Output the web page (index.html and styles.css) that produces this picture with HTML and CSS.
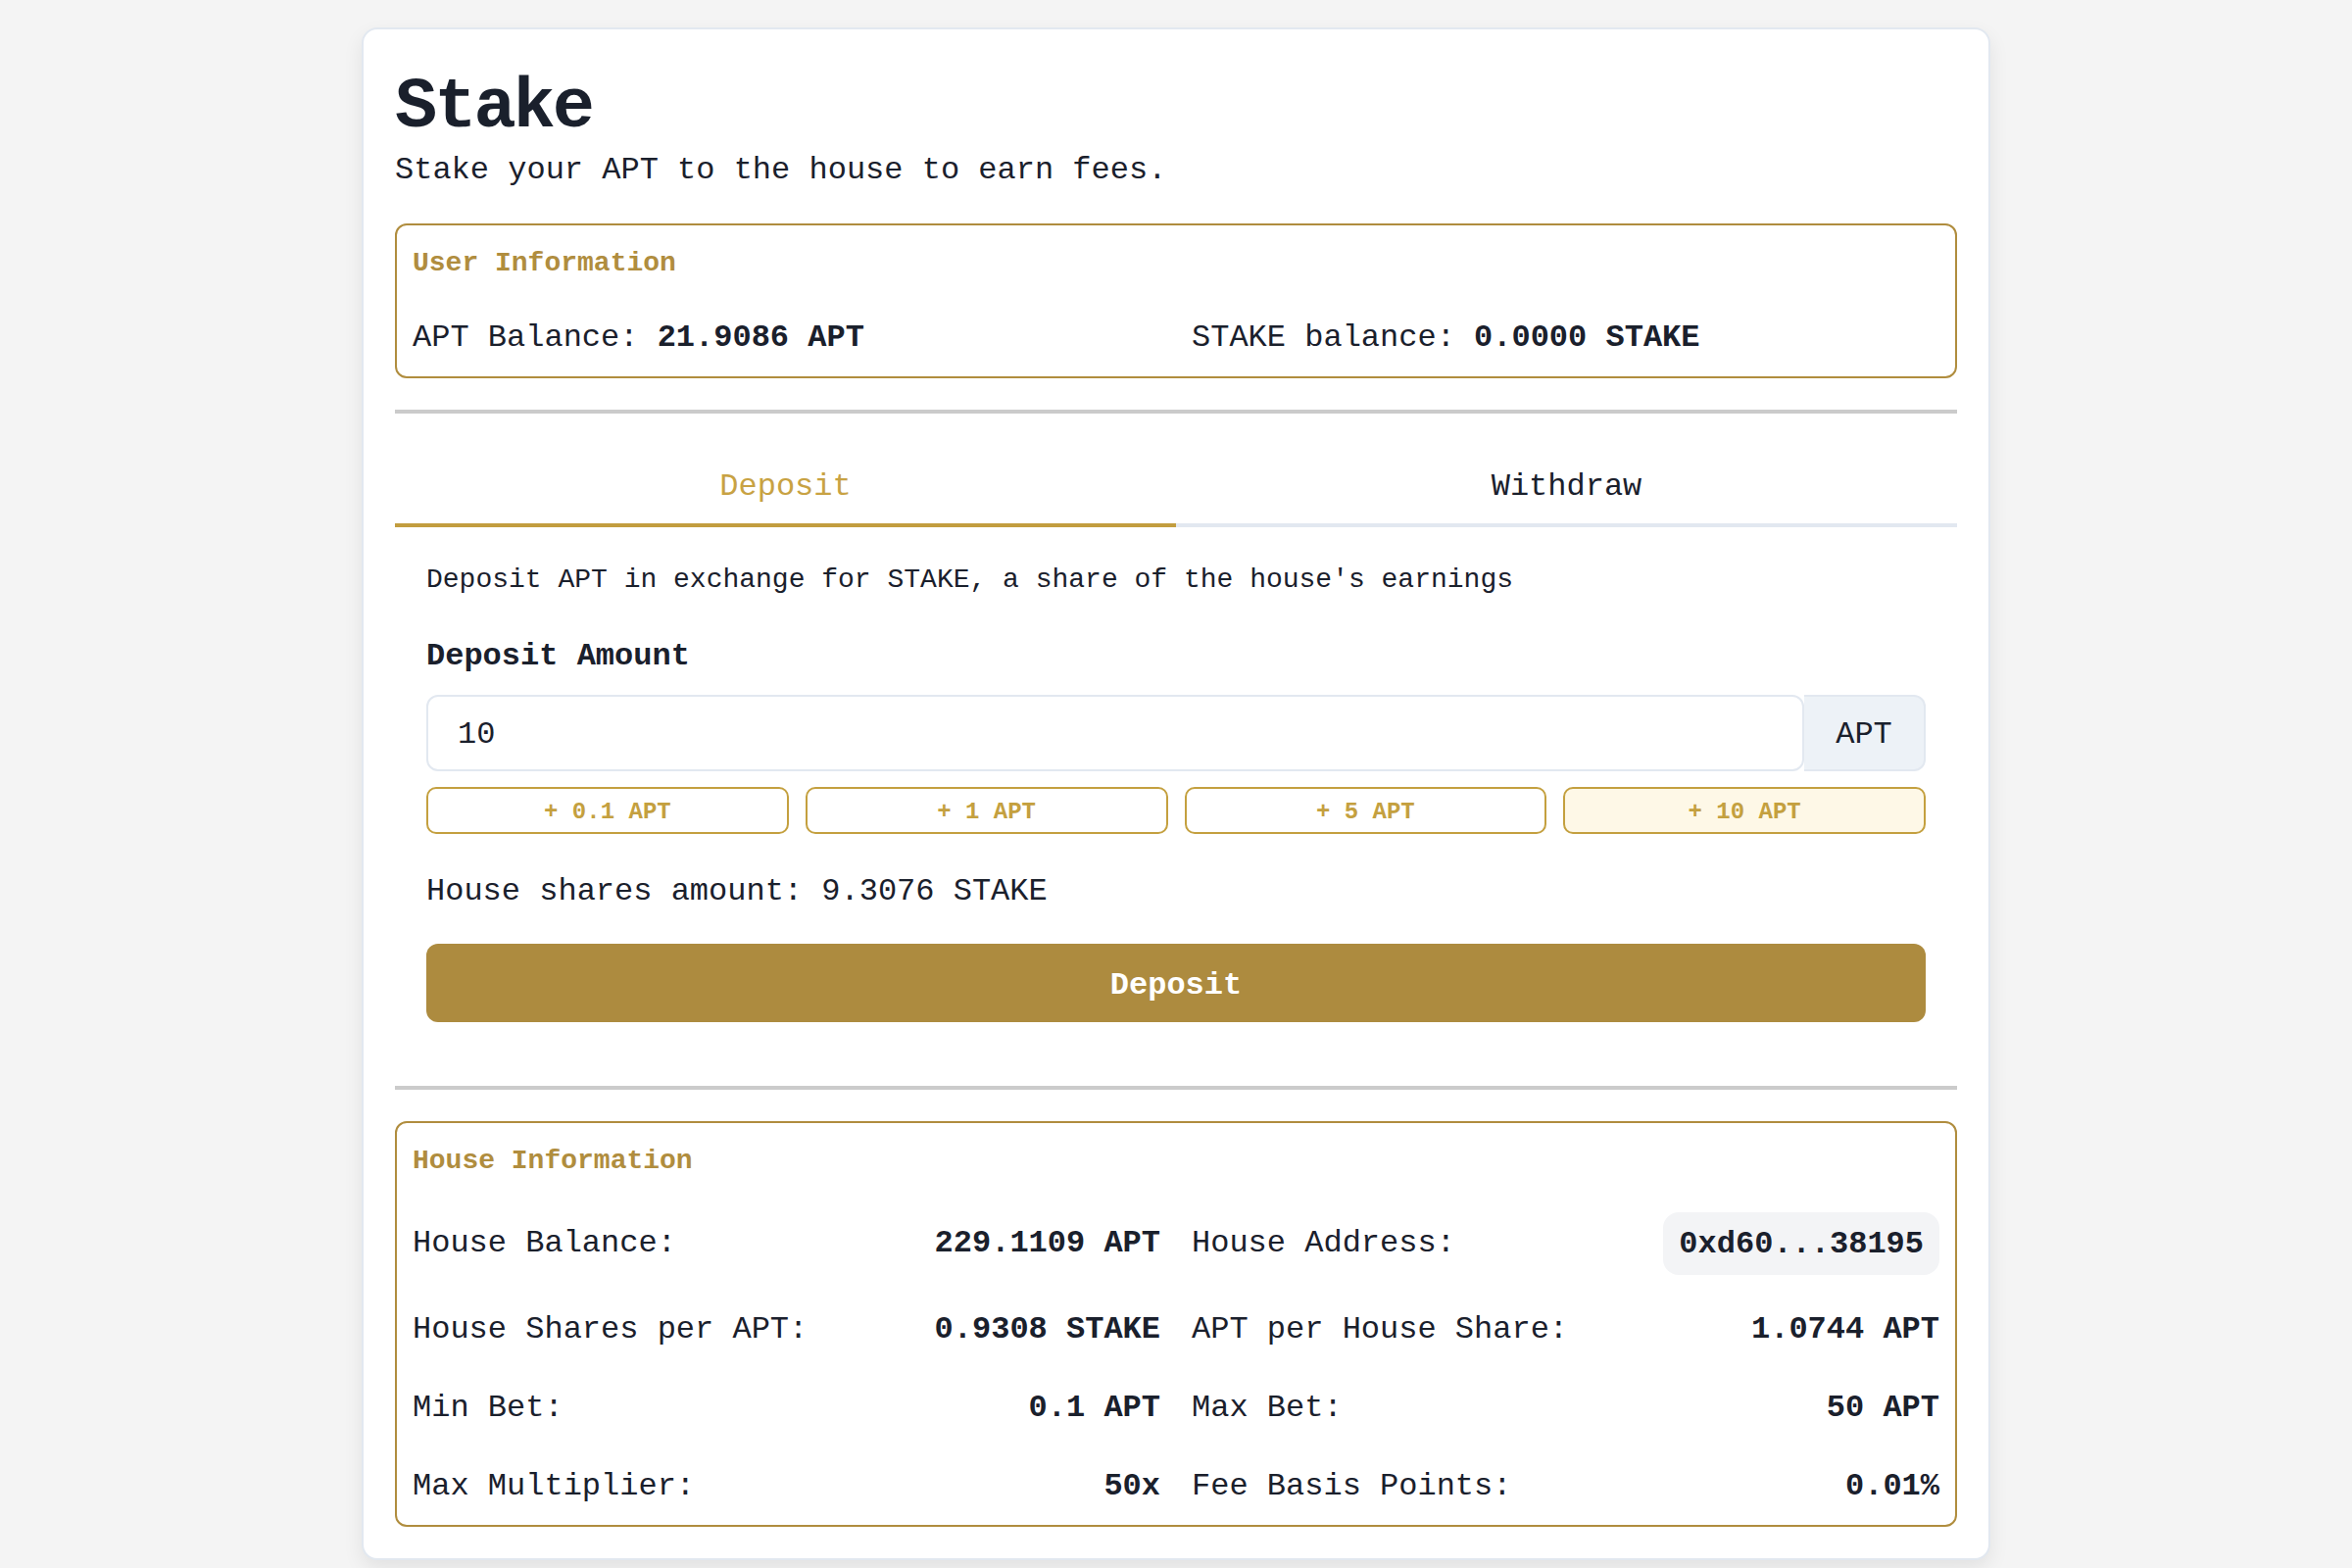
FILE: index.html
```html
<!DOCTYPE html>
<html lang="en">
<head>
<meta charset="utf-8">
<title>Stake</title>
<link rel="stylesheet" href="styles.css">
</head>
<body>
<div class="page">
  <main class="card">
    <h1 class="title">Stake</h1>
    <p class="subtitle">Stake your APT to the house to earn fees.</p>

    <section class="info-box">
      <h2 class="info-title">User Information</h2>
      <div class="info-grid">
        <div class="user-item">APT Balance: <b>21.9086 APT</b></div>
        <div class="user-item">STAKE balance: <b>0.0000 STAKE</b></div>
      </div>
    </section>

    <hr class="divider">

    <div class="tabs">
      <button class="tab tab-active">Deposit</button>
      <button class="tab">Withdraw</button>
    </div>

    <div class="panel">
      <p class="desc">Deposit APT in exchange for STAKE, a share of the house's earnings</p>
      <div class="field-label">Deposit Amount</div>
      <div class="input-group">
        <div class="input">10</div>
        <div class="addon">APT</div>
      </div>
      <div class="quick">
        <button class="quick-btn">+ 0.1 APT</button>
        <button class="quick-btn">+ 1 APT</button>
        <button class="quick-btn">+ 5 APT</button>
        <button class="quick-btn quick-active">+ 10 APT</button>
      </div>
      <div class="shares">House shares amount: 9.3076 STAKE</div>
      <button class="primary">Deposit</button>
    </div>

    <hr class="divider">

    <section class="info-box">
      <h2 class="info-title">House Information</h2>
      <div class="info-grid">
        <div class="row"><span>House Balance:</span><b>229.1109 APT</b></div>
        <div class="row"><span>House Address:</span><b class="pill">0xd60...38195</b></div>
        <div class="row"><span>House Shares per APT:</span><b>0.9308 STAKE</b></div>
        <div class="row"><span>APT per House Share:</span><b>1.0744 APT</b></div>
        <div class="row"><span>Min Bet:</span><b>0.1 APT</b></div>
        <div class="row"><span>Max Bet:</span><b>50 APT</b></div>
        <div class="row"><span>Max Multiplier:</span><b>50x</b></div>
        <div class="row"><span>Fee Basis Points:</span><b>0.01%</b></div>
      </div>
    </section>
  </main>
</div>
</body>
</html>
```

FILE: styles.css
```css
* { box-sizing: border-box; }

body {
  margin: 0;
  background: #f4f4f4;
  color: #1a202c;
  font-family: "Liberation Mono", "DejaVu Sans Mono", monospace;
  font-size: 32px;
  line-height: 48px;
}

.page {
  display: flex;
  justify-content: center;
  padding: 28px 0 40px;
}

.card {
  width: 1662px;
  background: #ffffff;
  border: 2px solid #e2e8f0;
  border-radius: 16px;
  padding: 32px;
  box-shadow: 0 8px 20px rgba(0, 0, 0, 0.08);
}

.title {
  margin: 0;
  padding-top: 8px;
  font-size: 72px;
  line-height: 80px;
  font-weight: 700;
  letter-spacing: -3px;
}

.subtitle {
  margin: 0 0 30px;
}

.info-box {
  border: 2px solid #b08d3e;
  border-radius: 12px;
  padding: 19px 16px 15px;
}

.info-title {
  margin: 0 0 32px;
  font-size: 28px;
  line-height: 40px;
  font-weight: 700;
  color: #b08d3e;
}

.info-grid {
  display: grid;
  grid-template-columns: 1fr 1fr;
  column-gap: 32px;
  row-gap: 32px;
}

.user-item b { font-weight: 700; }

.row {
  display: flex;
  justify-content: space-between;
  align-items: center;
}

.row b { font-weight: 700; }

.pill {
  background: #f3f4f6;
  border-radius: 16px;
  padding: 9px 16px 7px;
}

.divider {
  border: 0;
  height: 4px;
  background: #cbcbcb;
  margin: 32px 0;
}

.tabs {
  display: flex;
}

.tab {
  flex: 1;
  font: inherit;
  background: none;
  border: 0;
  border-bottom: 4px solid #e2e8f0;
  padding: 19px 16px 13px;
  color: #1a202c;
  cursor: pointer;
}

.tab-active {
  color: #c8a243;
  border-bottom-color: #c29d3f;
}

.panel {
  padding: 33px 32px 33px;
}

.desc {
  margin: 0 0 33px;
  font-size: 28px;
  line-height: 42px;
}

.field-label {
  font-weight: 700;
  margin-bottom: 15px;
}

.input-group {
  display: flex;
  height: 78px;
}

.input {
  flex: 1;
  border: 2px solid #e2e8f0;
  border-radius: 12px;
  padding: 15px 30px 11px;
}

.addon {
  width: 124px;
  display: flex;
  align-items: center;
  justify-content: center;
  padding-top: 3px;
  background: #edf2f7;
  border: 2px solid #e2e8f0;
  border-left: 0;
  border-radius: 0 12px 12px 0;
}

.quick {
  display: grid;
  grid-template-columns: repeat(4, 1fr);
  gap: 17px;
  margin-top: 16px;
}

.quick-btn {
  font-family: inherit;
  font-size: 24px;
  line-height: 32px;
  font-weight: 700;
  color: #c4a03f;
  background: #ffffff;
  border: 2px solid #c4a03f;
  border-radius: 10px;
  padding: 8px 8px 4px;
}

.quick-active {
  background: #fef8e7;
}

.shares {
  margin-top: 35px;
}

.primary {
  display: block;
  width: 100%;
  margin-top: 29px;
  font: inherit;
  font-weight: 700;
  color: #ffffff;
  background: #ad8b3f;
  border: 0;
  border-radius: 12px;
  padding: 19px 16px 13px;
}
```
